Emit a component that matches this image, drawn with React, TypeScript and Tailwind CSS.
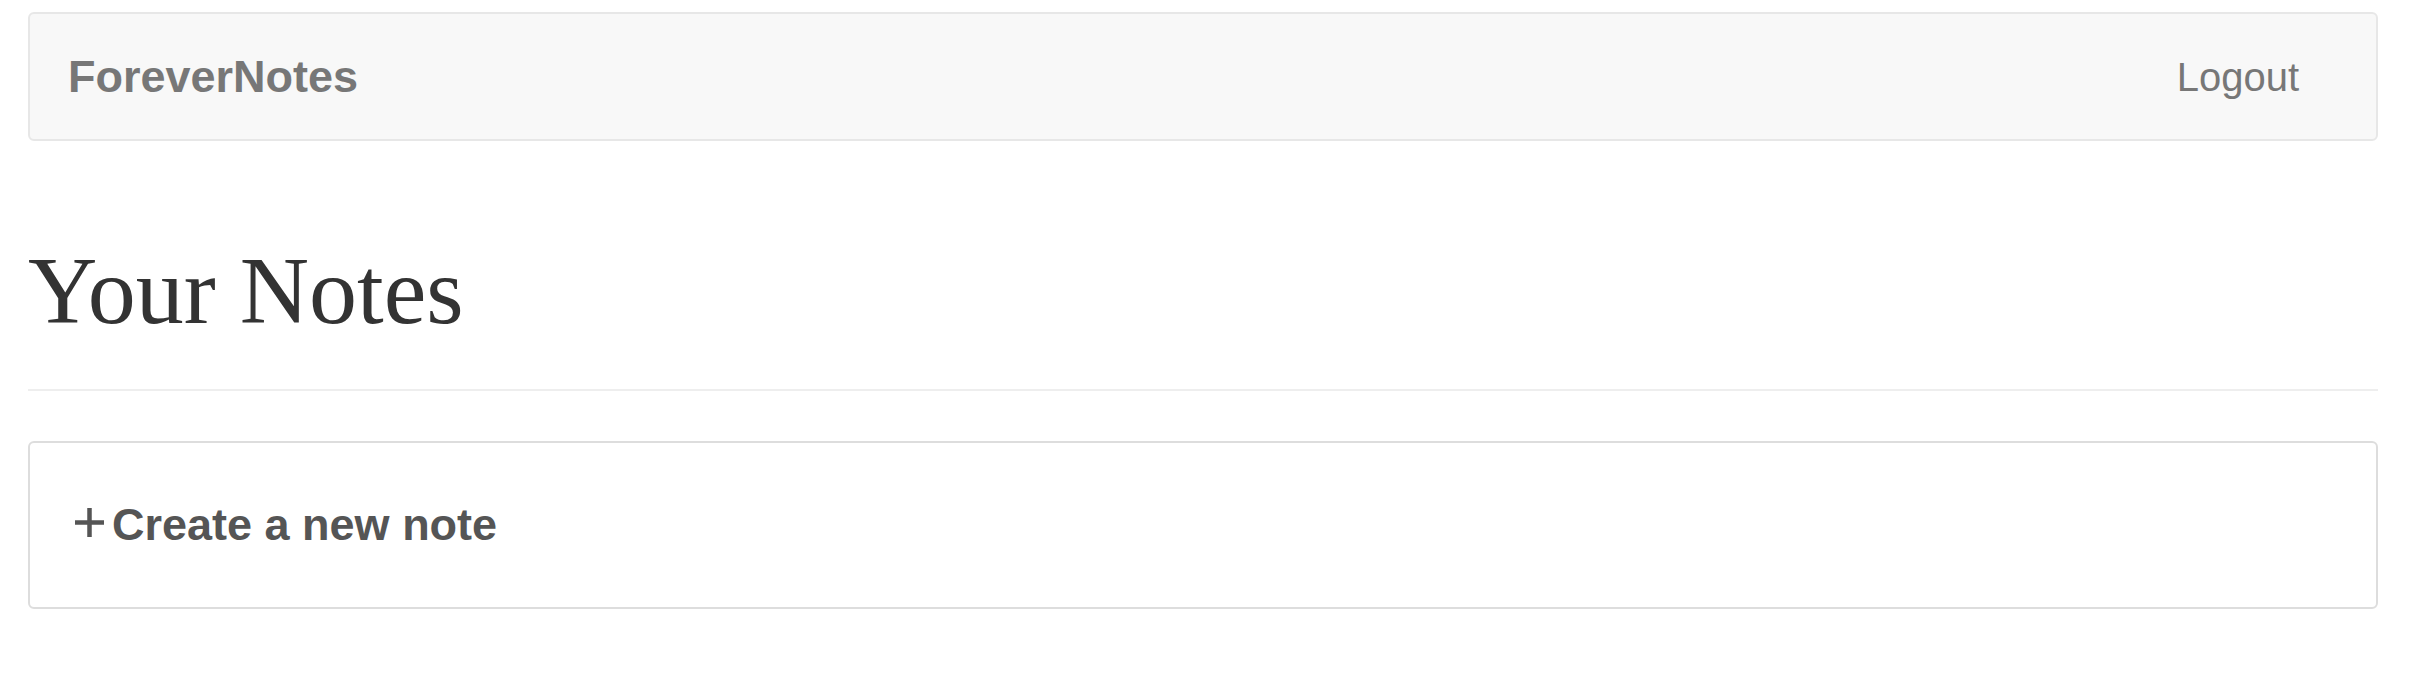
import React from "react";

export default function App() {
  return (
    <div className="min-h-screen bg-white pl-[28px] pr-[42px] pt-[12px]" style={{ fontFamily: '"Liberation Sans", Arial, sans-serif' }}>
      <nav className="flex h-[129px] items-center justify-between rounded-[6px] border-2 border-[#e7e7e7] bg-[#f8f8f8] pl-[38px] pr-[77px]">
        <span className="text-[45px] font-bold text-[#777777]">ForeverNotes</span>
        <span className="text-[40px] text-[#777777]">Logout</span>
      </nav>
      <h1
        className="mt-[97px] pb-[45px] text-[96px] leading-[106px] text-[#333333]"
        style={{ fontFamily: '"Liberation Serif", "DejaVu Serif", serif' }}
      >
        Your Notes
      </h1>
      <div className="h-[2px] bg-[#eeeeee]" />
      <div className="mt-[50px] flex h-[168px] items-center rounded-[6px] border-2 border-[#dddddd] bg-white pl-[45px]">
        <svg width="29" height="29" viewBox="0 0 29 29" className="mb-[5px] mr-[8px] shrink-0">
          <path d="M14.5 0 V29 M0 14.5 H29" stroke="#555555" strokeWidth="4.5" fill="none" />
        </svg>
        <span className="text-[45px] font-bold text-[#555555]">Create a new note</span>
      </div>
    </div>
  );
}
